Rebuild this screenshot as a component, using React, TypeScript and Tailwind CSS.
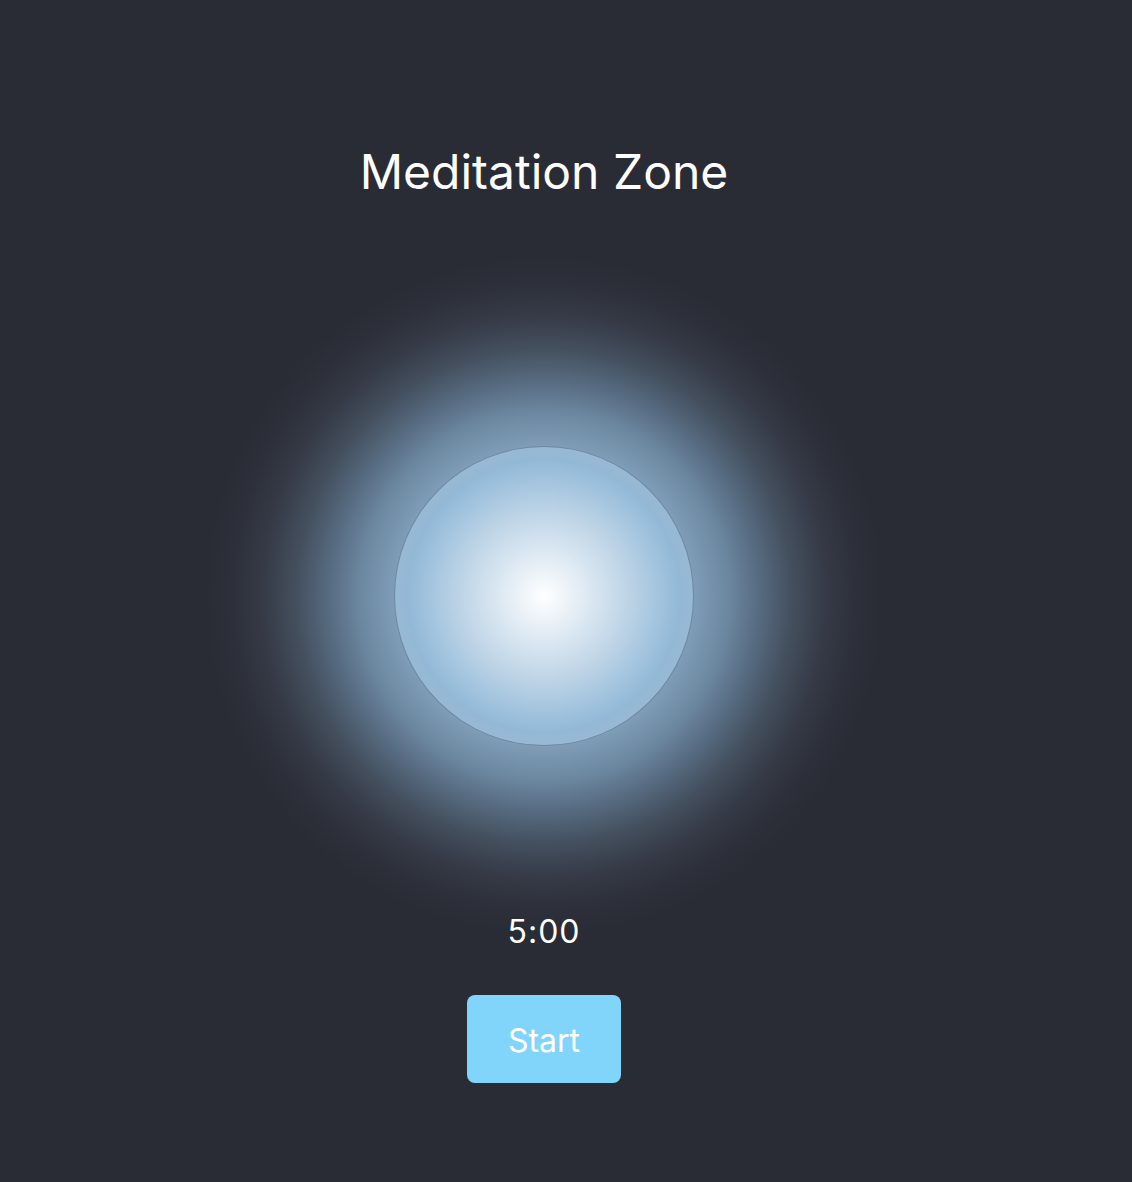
export default function App() {
  return (
    <div
      className="min-h-[1182px] w-full bg-[#292c35] text-white"
      style={{ fontFamily: "Inter, 'Noto Sans', sans-serif" }}
    >
      <div className="flex w-[1088px] flex-col items-center">
        {/* Title */}
        <h1 className="relative mt-[143px] text-[48px] font-normal leading-[58px]">
          Meditation Zone
        </h1>

        {/* Breathing orb */}
        <div className="relative mt-[245px] h-[300px] w-[300px]">
          <div className="absolute -inset-[190px] rounded-full bg-[radial-gradient(circle_closest-side,#8aa9c4_0%,#7f9db8_44%,#6c88a1_54%,#576c82_63%,#444f5e_73%,#353a46_83%,#2d303a_92%,rgba(41,44,53,0)_100%)]" />
          <div className="relative h-full w-full rounded-full border border-[#5f7489]/70 bg-[radial-gradient(circle_closest-side,#ffffff_0%,#e2ecf4_25%,#bfd5e7_55%,#99bedb_85%,#93b8d6_92%,#98b9d4_100%)]" />
        </div>

        {/* Timer */}
        <div className="relative mt-[166px] text-[32px] leading-[40px] tracking-[0.03em]">5:00</div>

        {/* Button */}
        <button className="relative mt-[43px] flex h-[88px] w-[154px] items-center justify-center rounded-lg bg-[#81d4fa] pt-[3px] text-[32px] text-white">
          Start
        </button>
      </div>
    </div>
  );
}
